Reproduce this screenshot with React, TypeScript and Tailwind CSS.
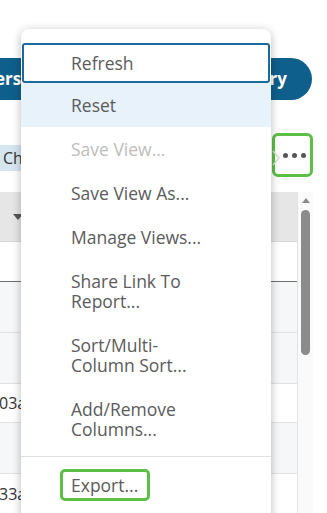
import React from 'react';

const items: { label: string[]; kind?: 'focus' | 'hover' | 'disabled' }[] = [
  { label: ['Refresh'], kind: 'focus' },
  { label: ['Reset'], kind: 'hover' },
  { label: ['Save View...'], kind: 'disabled' },
  { label: ['Save View As...'] },
  { label: ['Manage Views...'] },
  { label: ['Share Link To', 'Report...'] },
  { label: ['Sort/Multi-', 'Column Sort...'] },
  { label: ['Add/Remove', 'Columns...'] },
];

function MenuItem({ label, kind }: { label: string[]; kind?: string }) {
  if (kind === 'focus') {
    return (
      <div className="mx-[1px] h-[40px] border-2 border-[#1b6a9b] rounded-[3px] pl-[47px] flex items-center text-[#5b5b5b]">
        {label[0]}
      </div>
    );
  }
  const bg = kind === 'hover' ? 'bg-[#e7f2fb]' : '';
  const color = kind === 'disabled' ? 'text-[#bdbdbd]' : 'text-[#5b5b5b]';
  return (
    <div className={`${bg} ${color} pl-[50px] py-[12px]`}>
      {label.map((l) => (
        <div key={l}>{l}</div>
      ))}
    </div>
  );
}

export default function App() {
  return (
    <div className="relative w-[327px] h-[513px] overflow-hidden bg-white font-['Open_Sans',sans-serif] text-[#333]">
      {/* toolbar */}
      <div className="pt-[58px]">
        <div className="flex h-[42px]">
          <div className="w-[70px] h-full bg-[#0f5f8c] rounded-r-full flex items-center text-white font-bold text-[17px]">
            <span className="ml-[-5px]">ers</span>
          </div>
          <div className="ml-auto mr-[15px] w-[110px] h-full bg-[#0f5f8c] rounded-full flex items-center justify-end pr-[25px] text-white font-bold text-[17px]">
            History
          </div>
        </div>

        <div className="mt-[33px] flex h-[44px] items-start">
          <div className="mt-[12px] h-[26px] w-[120px] bg-[#d6e6f1] flex items-center pl-[3px] text-[16px] text-[#333]">
            Ch
          </div>
          <div className="ml-auto mr-[14px] w-[41px] h-[44px] border-[3px] border-[#5cbf46] rounded-[6px] flex items-center justify-center gap-[4px] pl-[4px]">
            <span className="w-[5px] h-[5px] rounded-full bg-[#555]" />
            <span className="w-[5px] h-[5px] rounded-full bg-[#555]" />
            <span className="w-[5px] h-[5px] rounded-full bg-[#555]" />
          </div>
        </div>
      </div>

      {/* grid */}
      <div className="mt-[15px] flex">
        <div className="w-[298px] border-r border-[#e3e3e3]">
          <div className="h-[50px] bg-[#e6e6e6] border-b border-[#d8d8d8] flex items-center">
            <span className="ml-[13px] w-0 h-0 border-l-[5px] border-r-[5px] border-t-[6px] border-l-transparent border-r-transparent border-t-[#555]" />
          </div>
          <div className="h-[40px] bg-white border-b border-[#6f6f6f]" />
          <div className="h-[51px] bg-[#f6f7f9] border-b border-[#e2e2e2]" />
          <div className="h-[51px] bg-[#f6f7f9] border-b border-[#e2e2e2]" />
          <div className="h-[39px] bg-white border-b border-[#e2e2e2] flex items-center text-[16px]">
            <span className="ml-[-1px]">03a</span>
          </div>
          <div className="h-[51px] bg-[#f6f7f9] border-b border-[#e2e2e2]" />
          <div className="h-[40px] bg-white flex items-center text-[16px]">
            <span className="ml-[-1px]">33a</span>
          </div>
        </div>
        <div className="w-[15px] bg-[#fafafa] flex flex-col items-center">
          <span className="mt-[6px] w-0 h-0 border-l-[4px] border-r-[4px] border-b-[5px] border-l-transparent border-r-transparent border-b-[#8b8b8b]" />
          <div className="mt-[7px] w-[9px] h-[145px] rounded-full bg-[#8b8b8b]" />
        </div>
      </div>

      {/* popover arrow hint */}
      <svg className="absolute left-[272px] top-[150px]" width="9" height="16" viewBox="0 0 9 16">
        <polyline points="1,1 7,8 1,15" fill="none" stroke="#dcdcdc" strokeWidth="1.5" />
      </svg>

      {/* menu */}
      <div className="absolute left-[21px] top-[29px] w-[250px] bg-white rounded-[8px] shadow-[0_2px_10px_rgba(0,0,0,0.28)] pt-[14px] pb-[30px] text-[17.5px] leading-[20px]">
        {items.map((it) => (
          <MenuItem key={it.label.join(' ')} label={it.label} kind={it.kind} />
        ))}
        <div className="mt-[5px] border-t border-[#e0e0e0]" />
        <div className="mt-[12px] ml-[39px] w-[90px] h-[32px] border-[3px] border-[#5cbf46] rounded-[5px] pl-[8px] flex items-center text-[#5b5b5b]">
          Export...
        </div>
      </div>
    </div>
  );
}
